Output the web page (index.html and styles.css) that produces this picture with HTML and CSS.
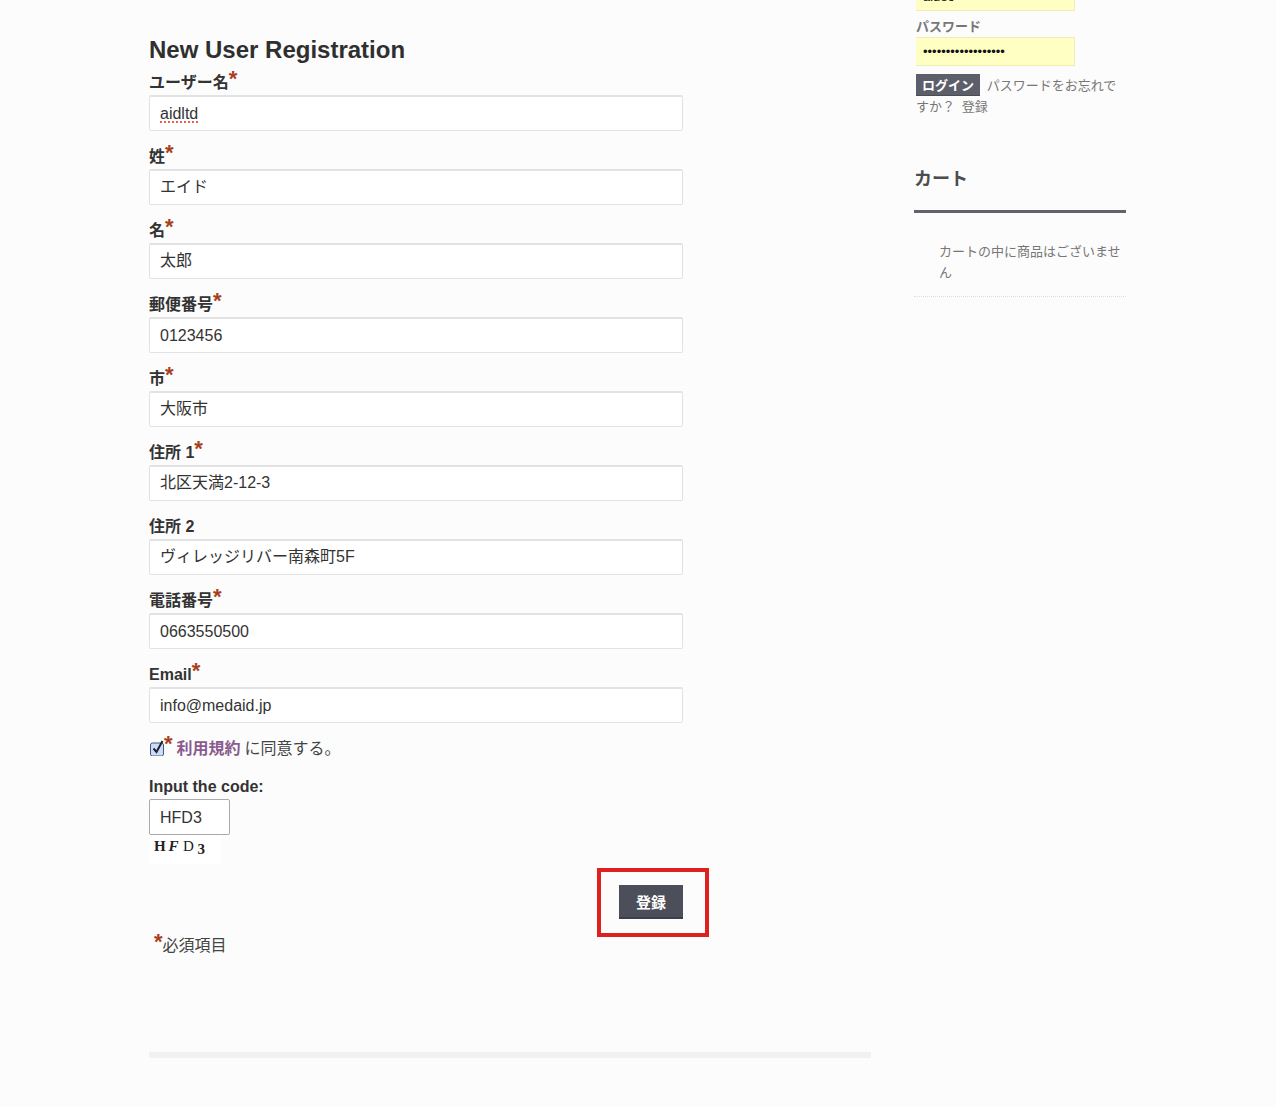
FILE: index.html
```html
<!DOCTYPE html>
<html lang="ja">

<head>
    <meta charset="utf-8">
    <meta name="viewport" content="width=device-width, initial-scale=1.0">
    <title>New User Registration</title>
    <link rel="stylesheet" href="styles.css">
</head>

<body>
    <div class="wrap">
        <main class="main">
            <h1>New User Registration</h1>
            <form>
                <div class="field">
                    <label>ユーザー名<span class="req">*</span></label>
                    <input class="text misspelt" type="text" value="aidltd">
                </div>
                <div class="field">
                    <label>姓<span class="req">*</span></label>
                    <input class="text text-ja" type="text" value="エイド">
                </div>
                <div class="field">
                    <label>名<span class="req">*</span></label>
                    <input class="text text-ja" type="text" value="太郎">
                </div>
                <div class="field">
                    <label>郵便番号<span class="req">*</span></label>
                    <input class="text" type="text" value="0123456">
                </div>
                <div class="field">
                    <label>市<span class="req">*</span></label>
                    <input class="text text-ja" type="text" value="大阪市">
                </div>
                <div class="field">
                    <label>住所 1<span class="req">*</span></label>
                    <input class="text text-ja" type="text" value="北区天満2-12-3">
                </div>
                <div class="field">
                    <label>住所 2</label>
                    <input class="text text-ja" type="text" value="ヴィレッジリバー南森町5F">
                </div>
                <div class="field">
                    <label>電話番号<span class="req">*</span></label>
                    <input class="text" type="text" value="0663550500">
                </div>
                <div class="field">
                    <label>Email<span class="req">*</span></label>
                    <input class="text" type="text" value="info@medaid.jp">
                </div>

                <div class="terms">
                    <svg class="check" width="16" height="16" viewBox="0 0 16 16">
                        <rect x="1.5" y="3" width="13" height="13" rx="2" fill="#cfdcf5" stroke="#3f5583" />
                        <path d="M4.5 8.5l3 3.5 6-11" fill="none" stroke="#1c2333" stroke-width="2" />
                    </svg>
                    <span class="req">*</span>
                    <a href="#">利用規約</a>
                    <span>に同意する。</span>
                </div>

                <div class="code">
                    <label>Input the code:</label>
                    <input class="code-input" type="text" value="HFD3">
                    <div class="captcha"><i>H</i><i>F</i><i>D</i><i>3</i></div>
                </div>

                <div class="submit-row">
                    <button type="button" class="btn">登録</button>
                    <div class="highlight"></div>
                </div>

                <p class="note"><span class="req">*</span>必須項目</p>
            </form>
            <div class="rule"></div>
        </main>

        <aside class="side">
            <input class="login-input" type="text" value="aideo">
            <label class="login-label">パスワード</label>
            <input class="login-input" type="password" value="aaaaaaaaaaaaaaaaaa">
            <div class="login-links">
                <button type="button" class="btn btn-small">ログイン</button>
                <a href="#">パスワードをお忘れで</a><br>
                <a class="first" href="#">すか？</a>
                <a href="#">登録</a>
            </div>
            <h3>カート</h3>
            <p class="empty">カートの中に商品はございません</p>
        </aside>
    </div>
</body>

</html>
```

FILE: styles.css
```css
html,
body {
    height: 1106px;
    overflow: hidden;
}

body {
    margin: 0;
    background-color: #fcfcfc;
    color: #333;
    font-family: "Liberation Sans", "Noto Sans CJK JP", sans-serif;
    font-size: 16px;
}

.wrap {
    display: flex;
    padding-left: 149px;
}

.main {
    width: 722px;
    padding-top: 36px;
}

h1 {
    margin: 0;
    font-size: 24px;
    line-height: 28px;
    color: #2f2f2f;
}

.field {
    height: 74px;
}

.field label,
.code label {
    display: block;
    height: 31px;
    line-height: 38px;
    font-weight: bold;
    color: #333;
}

.req {
    color: #a8401c;
    font-size: 22px;
    line-height: 16px;
    font-weight: bold;
    vertical-align: 2px;
}

.text,
.code-input {
    display: block;
    box-sizing: border-box;
    width: 534px;
    height: 36px;
    margin: 0;
    padding: 0 10px;
    background: #fff;
    border: 1px solid #e2e2e2;
    border-top: 2px solid #e2e2e2;
    border-radius: 2px;
    color: #333;
    font-family: inherit;
    font-size: 16px;
}

/* japanese values sit a bit higher in the box */
.text-ja {
    padding-bottom: 6px;
}

.misspelt {
    text-decoration: underline dotted #e8352a;
    text-underline-offset: 3px;
}

.terms {
    display: flex;
    align-items: center;
    height: 26px;
    margin-top: 4px;
    color: #444;
}

.check {
    flex: none;
    margin-top: 2px;
}

.terms .req {
    margin: -7px 4px 0 -1px;
    vertical-align: baseline;
}

.terms a {
    margin-right: 4px;
    color: #8a5a8e;
    font-weight: bold;
    text-decoration: none;
}

.code {
    margin-top: 10px;
}

.code label {
    height: 29px;
    line-height: 33px;
}

.code-input {
    width: 81px;
    padding-top: 2px;
    border: 1px solid #aaa;
    border-radius: 2px;
}

.captcha {
    display: flex;
    align-items: flex-start;
    width: 72px;
    height: 29px;
    background: #fff;
    color: #222;
    font-family: "Liberation Serif", serif;
    font-size: 15px;
    line-height: 22px;
}

.captcha i {
    width: 14.5px;
    padding-left: 5px;
    box-sizing: border-box;
    font-weight: bold;
}

.captcha i:nth-child(1) {
    font-style: normal;
}

.captcha i:nth-child(3) {
    font-style: normal;
    font-weight: normal;
}

.captcha i:nth-child(4) {
    padding-top: 3px;
    font-style: normal;
}

.submit-row {
    position: relative;
    display: flex;
    justify-content: flex-end;
    width: 534px;
    margin-top: 21px;
}

.btn {
    width: 64px;
    height: 34px;
    padding: 0;
    background: #4c4f5a;
    border: 0;
    border-bottom: 2px solid #3c3f48;
    color: #fff;
    font-family: inherit;
    font-size: 15px;
    font-weight: bold;
}

/* annotation box drawn over the button */
.highlight {
    position: absolute;
    top: -17px;
    right: -26px;
    box-sizing: border-box;
    width: 112px;
    height: 69px;
    border: 4px solid #e01f1f;
}

.note {
    margin: 15px 0 0 5px;
    color: #444;
    line-height: 24px;
}

.rule {
    height: 6px;
    margin-top: 94px;
    background: #f1f1f1;
}

.side {
    width: 212px;
    margin-left: 43px;
    margin-top: -18px;
    color: #777;
    font-size: 13px;
}

.login-input {
    display: block;
    box-sizing: border-box;
    width: 159px;
    height: 29px;
    margin: 0 0 0 2px;
    padding: 0 7px;
    background: #ffffc4;
    border: 0;
    border-top: 1px solid #eeeeb0;
    border-right: 1px solid #eeeeb0;
    border-bottom: 1px solid #eeeeb0;
    color: #111;
    font-family: inherit;
    font-size: 13px;
}

.login-label {
    display: block;
    margin-left: 2px;
    height: 26px;
    line-height: 32px;
    font-weight: bold;
}

.login-links {
    margin: 8px 0 0 2px;
    line-height: 21px;
    width: 205px;
}

.login-links a {
    margin-left: 3px;
    color: #777;
    text-decoration: none;
}

.login-links a.first {
    margin-left: 0;
}

.btn-small {
    width: 64px;
    height: 22px;
    font-size: 13px;
    background: #5c5f6a;
    border-bottom: 1px solid #4a4c55;
}

h3 {
    margin: 49px 0 0;
    height: 44px;
    border-bottom: 3px solid #62626d;
    color: #4d4d4d;
    font-size: 18px;
    line-height: 26px;
}

.empty {
    margin: 0;
    padding: 28px 0 13px 25px;
    border-bottom: 1px dotted #ddd;
    line-height: 21px;
}
```
